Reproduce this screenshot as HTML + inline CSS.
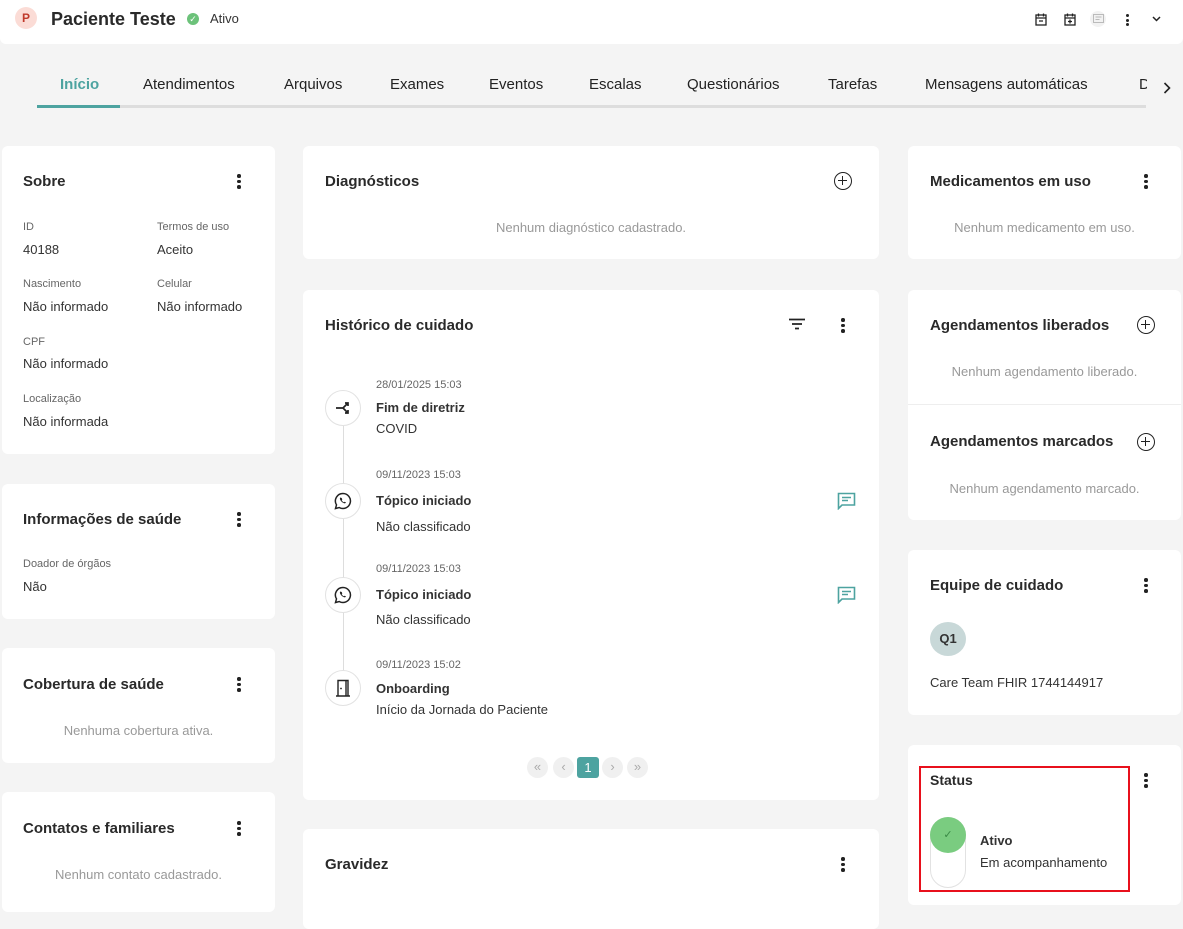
<!DOCTYPE html>
<html><head><meta charset="utf-8"><style>
*{box-sizing:border-box;margin:0;padding:0}
body{width:1183px;height:898px;overflow:hidden;background:#f4f4f4;font-family:"Liberation Sans",sans-serif;color:#222;position:relative}
.a{position:absolute}
.card{position:absolute;background:#fff;border-radius:6px}
.t{position:absolute;font-size:15px;font-weight:bold;color:#2a2a2a}
.lbl{position:absolute;font-size:11px;color:#666}
.val{position:absolute;font-size:13px;color:#333}
.empty{position:absolute;left:0;right:0;text-align:center;font-size:13px;color:#999}
.dots{position:absolute;width:4px}
.dots i{display:block;width:3.5px;height:3.5px;border-radius:50%;background:#222;margin-bottom:2px}
.tab{position:absolute;top:76px;font-size:15px;color:#222}
.plus{position:absolute;width:18px;height:18px;border:1.7px solid #222;border-radius:50%}
.plus:before{content:"";position:absolute;left:3px;top:6.5px;width:8.6px;height:1.7px;background:#222}
.plus:after{content:"";position:absolute;left:6.5px;top:3px;width:1.7px;height:8.6px;background:#222}
.circ{position:absolute;left:22px;width:36px;height:36px;border:1px solid #e2e2e2;border-radius:50%;background:#fff;display:flex;align-items:center;justify-content:center}
.pg{position:absolute;top:757px;width:21px;height:21px;border-radius:50%;background:#f0f0f0;color:#aaa;font-size:13px;text-align:center;line-height:20px}
</style></head><body>
<div class="a" style="left:0;top:0;width:1183px;height:44px;background:#fff;border-radius:0 0 6px 6px"></div>
<div class="a" style="left:15px;top:7px;width:22px;height:22px;border-radius:50%;background:#fbdcd6;color:#c0392b;font-size:12px;font-weight:bold;text-align:center;line-height:22px">P</div>
<div class="a" style="left:51px;top:9px;font-size:18px;font-weight:bold;color:#2a2a2a">Paciente Teste</div>
<div class="a" style="left:187px;top:13px;width:12px;height:12px;border-radius:50%;background:#6cc27a;color:#fff;font-size:9px;text-align:center;line-height:12px">✓</div>
<div class="a" style="left:210px;top:11px;font-size:13px;color:#333">Ativo</div>
<svg class="a" style="left:1035px;top:13px" width="12" height="13" viewBox="0 0 12 13"><rect x="1" y="2" width="10" height="10" fill="none" stroke="#222" stroke-width="1.3"/><path d="M1 5h10M3.5 0.5v3M8.5 0.5v3M4 8h4" stroke="#222" stroke-width="1.3"/></svg>
<svg class="a" style="left:1064px;top:13px" width="12" height="13" viewBox="0 0 12 13"><rect x="1" y="2" width="10" height="10" fill="none" stroke="#222" stroke-width="1.3"/><path d="M1 5h10M3.5 0.5v3M8.5 0.5v3M6 6.5v4M4 8.5h4" stroke="#222" stroke-width="1.3"/></svg>
<div class="a" style="left:1090px;top:11px;width:16px;height:16px;border-radius:50%;background:#f2f2f2"></div>
<svg class="a" style="left:1093px;top:14px" width="11" height="10"><rect x="0.5" y="0.5" width="10" height="8" fill="none" stroke="#bbb"/><path d="M2.5 3h6M2.5 5.5h4" stroke="#bbb"/></svg>
<div class="dots" style="left:1126px;top:14px"><i style="width:3px;height:3px;margin-bottom:1.5px"></i><i style="width:3px;height:3px;margin-bottom:1.5px"></i><i style="width:3px;height:3px"></i></div>
<svg class="a" style="left:1152px;top:16px" width="9" height="6"><path d="M1 1l3.5 3.5L8 1" stroke="#222" stroke-width="1.5" fill="none"/></svg>

<div class="a" style="left:37px;top:105px;width:1109px;height:3px;background:#ddd"></div>
<div class="a" style="left:37px;top:105px;width:83px;height:3px;background:#4da3a0"></div>
<div class="tab" style="left:60px;color:#4da3a0;font-weight:bold">Início</div>
<div class="tab" style="left:143px">Atendimentos</div>
<div class="tab" style="left:284px">Arquivos</div>
<div class="tab" style="left:390px">Exames</div>
<div class="tab" style="left:489px">Eventos</div>
<div class="tab" style="left:589px">Escalas</div>
<div class="tab" style="left:687px">Questionários</div>
<div class="tab" style="left:828px">Tarefas</div>
<div class="tab" style="left:925px">Mensagens automáticas</div>
<div class="tab" style="left:1139px;width:8px;overflow:hidden">D</div>
<svg class="a" style="left:1163px;top:82px" width="8" height="12"><path d="M1.5 1l5 5-5 5" stroke="#222" stroke-width="1.6" fill="none"/></svg>

<div class="card" style="left:2px;top:146px;width:273px;height:308px">
<div class="t" style="left:21px;top:27px">Sobre</div>
<div class="dots" style="left:235px;top:28px"><i></i><i></i><i></i></div>
<div class="lbl" style="left:21px;top:75px">ID</div><div class="val" style="left:21px;top:96px">40188</div>
<div class="lbl" style="left:155px;top:75px">Termos de uso</div><div class="val" style="left:155px;top:96px">Aceito</div>
<div class="lbl" style="left:21px;top:132px">Nascimento</div><div class="val" style="left:21px;top:153px">Não informado</div>
<div class="lbl" style="left:155px;top:132px">Celular</div><div class="val" style="left:155px;top:153px">Não informado</div>
<div class="lbl" style="left:21px;top:190px">CPF</div><div class="val" style="left:21px;top:210px">Não informado</div>
<div class="lbl" style="left:21px;top:247px">Localização</div><div class="val" style="left:21px;top:268px">Não informada</div>
</div>
<div class="card" style="left:2px;top:484px;width:273px;height:135px">
<div class="t" style="left:21px;top:27px">Informações de saúde</div>
<div class="dots" style="left:235px;top:28px"><i></i><i></i><i></i></div>
<div class="lbl" style="left:21px;top:74px">Doador de órgãos</div><div class="val" style="left:21px;top:95px">Não</div>
</div>
<div class="card" style="left:2px;top:648px;width:273px;height:115px">
<div class="t" style="left:21px;top:28px">Cobertura de saúde</div>
<div class="dots" style="left:235px;top:29px"><i></i><i></i><i></i></div>
<div class="empty" style="top:75px">Nenhuma cobertura ativa.</div>
</div>
<div class="card" style="left:2px;top:792px;width:273px;height:120px">
<div class="t" style="left:21px;top:28px">Contatos e familiares</div>
<div class="dots" style="left:235px;top:29px"><i></i><i></i><i></i></div>
<div class="empty" style="top:75px">Nenhum contato cadastrado.</div>
</div>

<div class="card" style="left:303px;top:146px;width:576px;height:113px">
<div class="t" style="left:22px;top:27px">Diagnósticos</div>
<div class="plus" style="left:531px;top:26px"></div>
<div class="empty" style="top:74px">Nenhum diagnóstico cadastrado.</div>
</div>
<div class="card" style="left:303px;top:290px;width:576px;height:510px">
<div class="t" style="left:22px;top:27px">Histórico de cuidado</div>
<svg class="a" style="left:485px;top:28px" width="18" height="12"><path d="M1 1.5h16M4 6h10M7 10.5h4" stroke="#222" stroke-width="1.7"/></svg>
<div class="dots" style="left:538px;top:28px"><i></i><i></i><i></i></div>
<div class="a" style="left:40px;top:120px;width:1px;height:280px;background:#ddd"></div>
<div class="circ" style="top:100px"><svg width="16" height="14" viewBox="0 0 16 14"><path d="M1 7h7l5-5M8 7l5 5M10 2h3v3M13 9v3h-3" stroke="#222" stroke-width="1.7" fill="none"/></svg></div>
<div class="lbl" style="left:73px;top:89px">28/01/2025 15:03</div>
<div class="val" style="left:73px;top:110px;font-weight:bold">Fim de diretriz</div>
<div class="val" style="left:73px;top:131px">COVID</div>
<div class="circ" style="top:193px"><svg width="18" height="18" viewBox="0 0 18 18"><path d="M9 1.5a7.5 7.5 0 1 1-3.8 14L1.5 16.5l1-3.6A7.5 7.5 0 0 1 9 1.5z" stroke="#222" stroke-width="1.5" fill="none"/><path d="M6.3 5.5c-.6.6-.6 1.8.5 3.3 1.2 1.6 2.8 2.6 3.8 2.6.8 0 1.3-.6 1.3-1l-1.3-.7-.7.6c-.8-.3-1.8-1.3-2.2-2.1l.6-.7-.6-1.5z" fill="#222"/></svg></div>
<div class="lbl" style="left:73px;top:179px">09/11/2023 15:03</div>
<div class="val" style="left:73px;top:203px;font-weight:bold">Tópico iniciado</div>
<div class="val" style="left:73px;top:229px">Não classificado</div>
<svg class="a" style="left:534px;top:202px" width="19" height="18" viewBox="0 0 19 18"><path d="M1.5 1.5h16v11.5H5l-3.5 3.5z" stroke="#4da3a0" stroke-width="1.6" fill="none"/><path d="M5 5.5h9M5 8.5h6" stroke="#4da3a0" stroke-width="1.5"/></svg>
<div class="circ" style="top:287px"><svg width="18" height="18" viewBox="0 0 18 18"><path d="M9 1.5a7.5 7.5 0 1 1-3.8 14L1.5 16.5l1-3.6A7.5 7.5 0 0 1 9 1.5z" stroke="#222" stroke-width="1.5" fill="none"/><path d="M6.3 5.5c-.6.6-.6 1.8.5 3.3 1.2 1.6 2.8 2.6 3.8 2.6.8 0 1.3-.6 1.3-1l-1.3-.7-.7.6c-.8-.3-1.8-1.3-2.2-2.1l.6-.7-.6-1.5z" fill="#222"/></svg></div>
<div class="lbl" style="left:73px;top:273px">09/11/2023 15:03</div>
<div class="val" style="left:73px;top:297px;font-weight:bold">Tópico iniciado</div>
<div class="val" style="left:73px;top:322px">Não classificado</div>
<svg class="a" style="left:534px;top:296px" width="19" height="18" viewBox="0 0 19 18"><path d="M1.5 1.5h16v11.5H5l-3.5 3.5z" stroke="#4da3a0" stroke-width="1.6" fill="none"/><path d="M5 5.5h9M5 8.5h6" stroke="#4da3a0" stroke-width="1.5"/></svg>
<div class="circ" style="top:380px"><svg width="16" height="18" viewBox="0 0 16 18"><path d="M1 17h14M3 17V1.5h8V17M11 1.5h2V17" stroke="#222" stroke-width="1.4" fill="none"/><circle cx="6" cy="9.5" r="0.9" fill="#222"/></svg></div>
<div class="lbl" style="left:73px;top:369px">09/11/2023 15:02</div>
<div class="val" style="left:73px;top:391px;font-weight:bold">Onboarding</div>
<div class="val" style="left:73px;top:412px">Início da Jornada do Paciente</div>
</div>
<div class="pg" style="left:527px">«</div>
<div class="pg" style="left:553px">‹</div>
<div class="a" style="left:577px;top:757px;width:22px;height:21px;border-radius:3px;background:#4da3a0;color:#fff;font-size:13px;text-align:center;line-height:21px">1</div>
<div class="pg" style="left:602px">›</div>
<div class="pg" style="left:627px">»</div>
<div class="card" style="left:303px;top:829px;width:576px;height:100px">
<div class="t" style="left:22px;top:27px">Gravidez</div>
<div class="dots" style="left:538px;top:28px"><i></i><i></i><i></i></div>
</div>

<div class="card" style="left:908px;top:146px;width:273px;height:113px">
<div class="t" style="left:22px;top:27px">Medicamentos em uso</div>
<div class="dots" style="left:236px;top:28px"><i></i><i></i><i></i></div>
<div class="empty" style="top:74px">Nenhum medicamento em uso.</div>
</div>
<div class="card" style="left:908px;top:290px;width:273px;height:230px">
<div class="t" style="left:22px;top:27px">Agendamentos liberados</div>
<div class="plus" style="left:229px;top:26px"></div>
<div class="empty" style="top:74px">Nenhum agendamento liberado.</div>
<div class="a" style="left:0;top:114px;width:273px;height:1px;background:#eee"></div>
<div class="t" style="left:22px;top:143px">Agendamentos marcados</div>
<div class="plus" style="left:229px;top:143px"></div>
<div class="empty" style="top:191px">Nenhum agendamento marcado.</div>
</div>
<div class="card" style="left:908px;top:550px;width:273px;height:165px">
<div class="t" style="left:22px;top:27px">Equipe de cuidado</div>
<div class="dots" style="left:236px;top:28px"><i></i><i></i><i></i></div>
<div class="a" style="left:22px;top:72px;width:36px;height:34px;border-radius:50%;background:#c8d8d8;font-size:13px;font-weight:bold;text-align:center;line-height:34px;color:#333">Q1</div>
<div class="val" style="left:22px;top:125px">Care Team FHIR 1744144917</div>
</div>
<div class="card" style="left:908px;top:745px;width:273px;height:160px">
<div class="a" style="left:11px;top:21px;width:211px;height:126px;border:2px solid #e8101c"></div>
<div class="t" style="left:22px;top:27px;font-size:14px">Status</div>
<div class="dots" style="left:236px;top:28px"><i></i><i></i><i></i></div>
<div class="a" style="left:22px;top:72px;width:36px;height:71px;border:1px solid #e2e2e2;border-radius:18px"></div>
<div class="a" style="left:22px;top:72px;width:36px;height:36px;border-radius:50%;background:#7acc80;color:#3a8a45;font-size:11px;text-align:center;line-height:36px">✓</div>
<div class="val" style="left:72px;top:88px;font-weight:bold">Ativo</div>
<div class="val" style="left:72px;top:110px">Em acompanhamento</div>
</div>
</body></html>
